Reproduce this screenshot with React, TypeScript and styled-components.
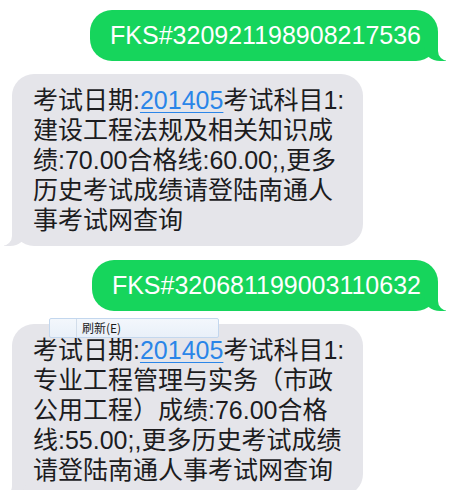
import React from "react";
import styled, { createGlobalStyle } from "styled-components";

const GlobalStyle = createGlobalStyle`
  html, body {
    margin: 0;
    padding: 0;
    background: #ffffff;
    overflow: hidden;
  }
  body {
    font-family: "Liberation Sans", "Noto Sans CJK SC", sans-serif;
    -webkit-font-smoothing: antialiased;
  }
`;

const green = "#16d55c";
const gray = "#e5e5ea";

const Thread = styled.div`
  position: relative;
  display: flex;
  flex-direction: column;
  padding: 10px 11px 0 12px;
  height: 490px;
  box-sizing: border-box;
`;

const Sent = styled.div`
  position: relative;
  align-self: flex-end;
  flex-shrink: 0;
  height: 51px;
  display: flex;
  align-items: center;
  padding: 0 17px 0 20px;
  border-radius: 22px;
  background: ${green};
  color: #ffffff;
  font-size: 25px;

  &::before {
    content: "";
    position: absolute;
    right: -8px;
    bottom: 0;
    width: 22px;
    height: 22px;
    background: ${green};
    border-bottom-left-radius: 16px 14px;
  }
  &::after {
    content: "";
    position: absolute;
    right: -26px;
    bottom: 0;
    width: 26px;
    height: 24px;
    background: #ffffff;
    border-bottom-left-radius: 10px;
  }
`;

const Received = styled.div`
  position: relative;
  align-self: flex-start;
  flex-shrink: 0;
  width: 351px;
  box-sizing: border-box;
  margin: 13px 0 14px;
  padding: 11px 14px 11px 21px;
  border-radius: 22px;
  background: ${gray};
  color: #1c1c1e;
  font-size: 25px;
  line-height: 30px;
  word-break: break-all;

  &::before {
    content: "";
    position: absolute;
    left: -8px;
    bottom: 0;
    width: 22px;
    height: 22px;
    background: ${gray};
    border-bottom-right-radius: 16px 14px;
  }
  &::after {
    content: "";
    position: absolute;
    left: -26px;
    bottom: 0;
    width: 26px;
    height: 24px;
    background: #ffffff;
    border-bottom-right-radius: 10px;
  }
`;

const DateLink = styled.a`
  color: #2a85e8;
  text-decoration: underline;
  text-decoration-thickness: 1px;
  text-underline-offset: 3px;
`;

const Menu = styled.div`
  position: absolute;
  top: 318px;
  left: 49px;
  width: 170px;
  height: 20px;
  box-sizing: border-box;
  display: flex;
  border: 1px solid #c3d7ee;
  border-radius: 2px;
  background: linear-gradient(#f3f7fc, #e9f0f9);
  z-index: 2;
`;

const MenuIcon = styled.div`
  width: 26px;
  border-right: 1px solid #d2ddea;
`;

const MenuLabel = styled.div`
  padding-left: 5px;
  font-family: "Noto Sans CJK SC", sans-serif;
  font-size: 12px;
  line-height: 18px;
  color: #1a1a1a;
`;

const App = () => (
  <>
    <GlobalStyle />
    <Thread>
      <Sent>FKS#320921198908217536</Sent>
      <Received>
        考试日期:<DateLink>201405</DateLink>考试科目1:建设工程法规及相关知识成绩:70.00合格线:60.00;,更多历史考试成绩请登陆南通人事考试网查询
      </Received>
      <Sent>FKS#320681199003110632</Sent>
      <Received>
        考试日期:<DateLink>201405</DateLink>考试科目1:专业工程管理与实务（市政公用工程）成绩:76.00合格线:55.00;,更多历史考试成绩请登陆南通人事考试网查询
      </Received>
      <Menu>
        <MenuIcon />
        <MenuLabel>刷新(E)</MenuLabel>
      </Menu>
    </Thread>
  </>
);

export default App;
